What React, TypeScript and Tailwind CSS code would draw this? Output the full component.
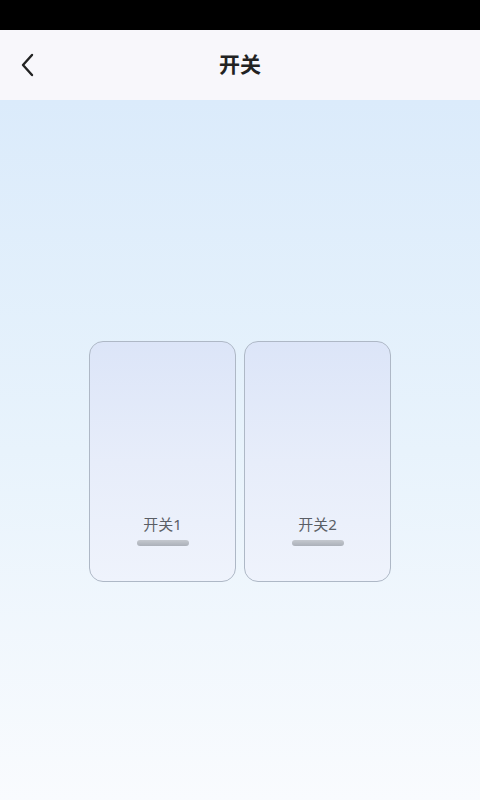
import React from "react";

function SwitchCard({ label }: { label: string }) {
  return (
    <div className="w-[147px] h-[241px] rounded-[14px] border border-[#aeb8c6] bg-gradient-to-b from-[#dce5f8] via-[#e7edfa] to-[#eff3fc] flex flex-col items-center justify-end pb-[35px]">
      <div className="text-[15px] leading-[18px] text-[#5a5e66]">{label}</div>
      <div className="mt-[7px] w-[52px] h-[6px] rounded-full bg-gradient-to-b from-[#c4c8cf] to-[#abb0b9]" />
    </div>
  );
}

export default function App() {
  return (
    <div
      className="w-[480px] h-[800px] flex flex-col overflow-hidden"
      style={{ fontFamily: '"Noto Sans", "Noto Sans CJK SC", sans-serif' }}
    >
      <div className="h-[30px] bg-black shrink-0" />
      <div className="h-[70px] bg-[#f8f7fb] shrink-0 relative flex items-center justify-center pb-[4px]">
        <div className="absolute left-[18px] top-[22px]">
          <svg width="20" height="26" viewBox="0 0 20 26" fill="none">
            <path d="M14 3 L5 13 L14 23" stroke="#222" strokeWidth="2.4" strokeLinecap="round" strokeLinejoin="round" />
          </svg>
        </div>
        <div className="text-[21px] font-bold text-[#222] leading-none" style={{ fontFamily: '"Noto Sans CJK SC", sans-serif' }}>开关</div>
      </div>
      <div className="flex-1 bg-gradient-to-b from-[#dbebfb] via-[#e8f3fc] to-[#f9fbfe] flex justify-center pt-[241px] gap-[8px]">
        <SwitchCard label="开关1" />
        <SwitchCard label="开关2" />
      </div>
    </div>
  );
}
